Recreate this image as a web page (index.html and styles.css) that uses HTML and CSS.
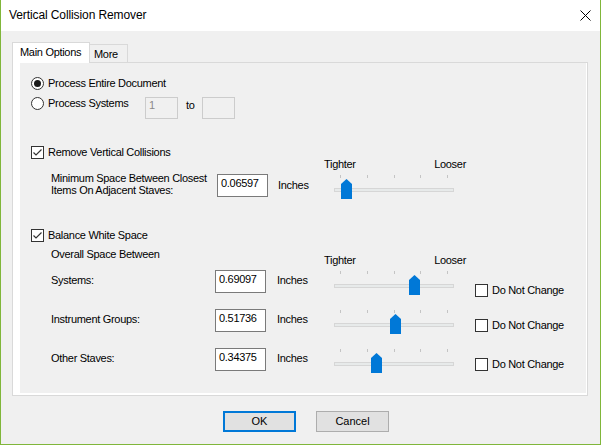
FILE: index.html
```html
<!DOCTYPE html>
<html>
<head>
<meta charset="utf-8">
<title>Vertical Collision Remover</title>
<link rel="stylesheet" href="styles.css">
</head>
<body>
<div class="window">
  <div class="titlebar">
    <span class="title">Vertical Collision Remover</span>
    <svg class="close" width="11" height="11" viewBox="0 0 11 11"><path d="M0.5 0.5 L10.5 10.5 M10.5 0.5 L0.5 10.5" stroke="#000" stroke-width="1" fill="none"/></svg>
  </div>
  <div class="client">
    <div class="tabs">
      <div class="tab tab-active">Main Options</div>
      <div class="tab tab-more">More</div>
    </div>
    <div class="panel">
      <div class="page">
        <div class="row r-radio1">
          <span class="radio on"></span><span class="lbl">Process Entire Document</span>
        </div>
        <div class="row r-radio2">
          <span class="radio"></span><span class="lbl lbl-sys">Process Systems</span>
          <div class="edit disabled small">1</div>
          <span class="to">to</span>
          <div class="edit disabled small"></div>
        </div>
        <div class="row r-check1">
          <span class="check"><svg width="11" height="11" viewBox="0 0 11 11"><path d="M1.5 5.5 L4 8 L9.5 2.5" stroke="#333" stroke-width="1.2" fill="none"/></svg></span><span class="lbl">Remove Vertical Collisions</span>
        </div>
        <div class="row r-min">
          <div class="fld-label fld-min">Minimum Space Between Closest<br>Items On Adjacent Staves:</div>
          <div class="edit edit-min">0.06597</div>
          <span class="unit unit-min">Inches</span>
          <div class="slider labelled">
            <div class="scale-labels"><span>Tighter</span><span>Looser</span></div>
            <div class="scale">
              <div class="ticks"><i></i><i></i><i></i><i></i><i></i></div>
              <div class="track"></div>
              <svg class="thumb" style="left:7px" width="11" height="20" viewBox="0 0 11 20"><path d="M5.5 0 L11 5 L11 20 L0 20 L0 5 Z" fill="#0078d7"/></svg>
            </div>
          </div>
        </div>
        <div class="row r-check2">
          <span class="check"><svg width="11" height="11" viewBox="0 0 11 11"><path d="M1.5 5.5 L4 8 L9.5 2.5" stroke="#333" stroke-width="1.2" fill="none"/></svg></span><span class="lbl">Balance White Space</span>
        </div>
        <div class="row r-overall">
          <div class="fld-label">Overall Space Between</div>
        </div>
        <div class="row r-val r-sys">
          <div class="fld-label">Systems:</div>
          <div class="edit">0.69097</div>
          <span class="unit">Inches</span>
          <div class="slider labelled">
            <div class="scale-labels"><span>Tighter</span><span>Looser</span></div>
            <div class="scale">
              <div class="ticks"><i></i><i></i><i></i><i></i><i></i></div>
              <div class="track"></div>
              <svg class="thumb" style="left:75px" width="11" height="20" viewBox="0 0 11 20"><path d="M5.5 0 L11 5 L11 20 L0 20 L0 5 Z" fill="#0078d7"/></svg>
            </div>
          </div>
          <div class="dnc dnc-sys"><span class="check"></span><span class="lbl">Do Not Change</span></div>
        </div>
        <div class="row r-val r-inst">
          <div class="fld-label">Instrument Groups:</div>
          <div class="edit">0.51736</div>
          <span class="unit">Inches</span>
          <div class="slider">
            <div class="scale">
              <div class="ticks"><i></i><i></i><i></i><i></i><i></i></div>
              <div class="track"></div>
              <svg class="thumb" style="left:56px" width="11" height="20" viewBox="0 0 11 20"><path d="M5.5 0 L11 5 L11 20 L0 20 L0 5 Z" fill="#0078d7"/></svg>
            </div>
          </div>
          <div class="dnc"><span class="check"></span><span class="lbl">Do Not Change</span></div>
        </div>
        <div class="row r-val r-other">
          <div class="fld-label">Other Staves:</div>
          <div class="edit">0.34375</div>
          <span class="unit">Inches</span>
          <div class="slider">
            <div class="scale">
              <div class="ticks"><i></i><i></i><i></i><i></i><i></i></div>
              <div class="track"></div>
              <svg class="thumb" style="left:37px" width="11" height="20" viewBox="0 0 11 20"><path d="M5.5 0 L11 5 L11 20 L0 20 L0 5 Z" fill="#0078d7"/></svg>
            </div>
          </div>
          <div class="dnc"><span class="check"></span><span class="lbl">Do Not Change</span></div>
        </div>
      </div>
    </div>
    <div class="buttons">
      <button class="btn btn-default">OK</button>
      <button class="btn">Cancel</button>
    </div>
  </div>
</div>
</body>
</html>
```

FILE: styles.css
```css
* { box-sizing: border-box; }
html, body { margin: 0; padding: 0; }
body {
  font-family: "Liberation Sans", Arial, sans-serif;
  font-size: 11px;
  line-height: 13px;
  letter-spacing: -0.3px;
  color: #000;
  background: #fff;
}
.window {
  width: 601px;
  height: 445px;
  border: 1px solid #80b63a;
  border-top: none;
  display: flex;
  flex-direction: column;
  background: #f0f0f0;
}
.titlebar {
  height: 31px;
  flex: none;
  background: #fff;
  display: flex;
  align-items: center;
  justify-content: space-between;
  padding: 0 9px 0 8px;
}
.title { font-size: 12px; letter-spacing: -0.1px; }
.close { display: block; }
.client {
  flex: 1;
  padding: 11px 12px 0 11px;
}
.tabs {
  display: flex;
  align-items: flex-end;
  height: 20px;
}
.tab {
  border: 1px solid #d9d9d9;
  border-bottom: none;
}
.tab-active {
  height: 21px;
  width: 78px;
  margin-bottom: -1px;
  background: #fff;
  padding: 3px 0 0 7px;
  position: relative;
  z-index: 1;
}
.tab-more {
  height: 18px;
  width: 38px;
  border-left: none;
  padding: 3px 0 0 4px;
}
.panel {
  height: 334px;
  border: 1px solid #d9d9d9;
  background: #fff;
  padding: 0 1px 2px 7px;
}
.page {
  height: 100%;
  background: #f0f0f0;
  padding: 14px 0 0 11px;
  display: flex;
  flex-direction: column;
}
.row {
  display: flex;
  align-items: flex-start;
}
.radio {
  width: 13px;
  height: 13px;
  border: 1px solid #333;
  border-radius: 50%;
  background: #fff;
  flex: none;
  display: flex;
  align-items: center;
  justify-content: center;
}
.radio.on::after {
  content: "";
  width: 7px;
  height: 7px;
  border-radius: 50%;
  background: #1a1a1a;
}
.check {
  width: 13px;
  height: 13px;
  border: 1px solid #333;
  background: #fff;
  flex: none;
}
.check svg { display: block; }
.lbl { margin-left: 4px; white-space: nowrap; }
.lbl-sys { width: 97px; }
.r-radio2 { margin-top: 7px; }
.edit {
  width: 51px;
  height: 23px;
  border: 1px solid #7a7a7a;
  background: #fff;
  padding: 2px 3px 0;
  flex: none;
}
.edit.disabled {
  height: 22px;
  padding-top: 1px;
  border-color: #cccccc;
  background: #f0f0f0;
  color: #8a8a8a;
}
.edit.small { width: 33px; }
.to { width: 16px; margin: 2px 0 0 8px; }
.r-check1 { margin-top: 27px; }
.r-min { margin-top: 15px; }
.fld-label {
  width: 184px;
  padding-left: 20px;
  flex: none;
  margin-top: 4px;
}
.fld-min {
  width: 186px;
  line-height: 12px;
  margin-top: -2px;
}
.r-overall .fld-label { margin-top: 0; }
.unit {
  width: 57px;
  margin-left: 11px;
  margin-top: 4px;
  flex: none;
}
.unit-min { width: 56px; margin-left: 10px; margin-top: 5px; }
.slider {
  width: 120px;
  flex: none;
  margin-top: 1px;
}
.slider.labelled { margin-top: -16px; }
.scale-labels {
  display: flex;
  justify-content: space-between;
  margin: 0 -12px 4px -10px;
  height: 13px;
}
.scale { position: relative; }
.ticks {
  display: flex;
  justify-content: space-between;
  padding: 0 6px;
  height: 3px;
}
.ticks i {
  display: block;
  width: 1px;
  height: 3px;
  background: #c4c4c4;
}
.track {
  margin-top: 10px;
  height: 4px;
  border: 1px solid #d6d6d6;
  background: #e7eaea;
}
.thumb {
  position: absolute;
  top: 4px;
  display: block;
}
.r-check2 { margin-top: 32px; }
.r-overall { margin-top: 6px; }
.r-val { height: 23px; }
.r-sys { margin-top: 9px; }
.r-inst, .r-other { margin-top: 16px; }
.dnc {
  display: flex;
  align-items: center;
  margin-left: 21px;
  margin-top: 10px;
}
.dnc-sys { margin-top: 14px; }
.buttons {
  display: flex;
  gap: 20px;
  padding-left: 211px;
  margin-top: 15px;
}
.btn {
  width: 73px;
  height: 21px;
  background: #e1e1e1;
  border: 1px solid #adadad;
  font: inherit;
  color: #000;
  padding: 0;
}
.btn-default { border: 2px solid #0078d7; }
```
